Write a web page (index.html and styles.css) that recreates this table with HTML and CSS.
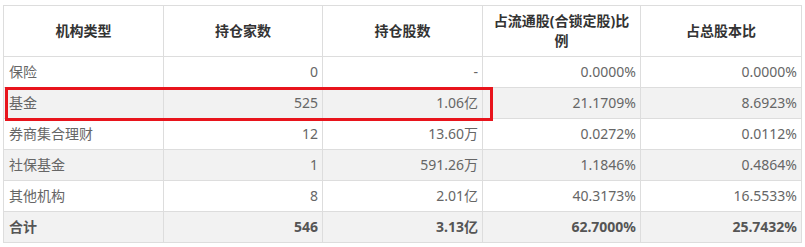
FILE: index.html
```html
<!DOCTYPE html>
<html lang="zh-CN">
<head>
<meta charset="utf-8">
<link rel="stylesheet" href="styles.css">
</head>
<body>
<div class="wrap">
  <table class="tbl">
    <colgroup>
      <col class="c1"><col class="c2"><col class="c3"><col class="c4"><col class="c5">
    </colgroup>
    <thead>
      <tr>
        <th>机构类型</th>
        <th>持仓家数</th>
        <th>持仓股数</th>
        <th>占流通股(合锁定股)比<br>例</th>
        <th>占总股本比</th>
      </tr>
    </thead>
    <tbody>
      <tr><td class="name">保险</td><td>0</td><td>-</td><td>0.0000%</td><td>0.0000%</td></tr>
      <tr class="alt"><td class="name">基金</td><td>525</td><td>1.06亿</td><td>21.1709%</td><td>8.6923%</td></tr>
      <tr><td class="name">券商集合理财</td><td>12</td><td>13.60万</td><td>0.0272%</td><td>0.0112%</td></tr>
      <tr class="alt"><td class="name">社保基金</td><td>1</td><td>591.26万</td><td>1.1846%</td><td>0.4864%</td></tr>
      <tr><td class="name">其他机构</td><td>8</td><td>2.01亿</td><td>40.3173%</td><td>16.5533%</td></tr>
      <tr class="alt total"><td class="name">合计</td><td>546</td><td>3.13亿</td><td>62.7000%</td><td>25.7432%</td></tr>
    </tbody>
  </table>
  <div class="highlight"></div>
</div>
</body>
</html>
```
FILE: styles.css
```css
html, body {
  margin: 0;
  padding: 0;
  background: #ffffff;
}
body {
  font-family: "Noto Sans", "Noto Sans CJK SC", sans-serif;
  font-size: 14px;
  color: #666666;
}
.wrap {
  position: relative;
  margin: 5px 0 0 3px;
  width: 798px;
}
.tbl {
  border-collapse: collapse;
  table-layout: fixed;
  width: 798px;
}
.c1 { width: 160px; }
.c2 { width: 159px; }
.c3 { width: 160px; }
.c4 { width: 158px; }
.c5 { width: 161px; }
.tbl th,
.tbl td {
  border: 1px solid #dddddd;
}
.tbl th {
  height: 50px;
  padding: 0 6px;
  font-weight: bold;
  color: #333333;
  text-align: center;
  line-height: 20px;
  vertical-align: middle;
}
.tbl td {
  height: 30px;
  padding: 0 4px 0 5px;
  text-align: right;
  line-height: 20px;
  vertical-align: middle;
}
.tbl td.name {
  text-align: left;
}
.tbl tr.alt td {
  background: #f2f2f2;
}
.tbl tr.total td {
  font-weight: bold;
  color: #555555;
}
.highlight {
  position: absolute;
  left: 2px;
  top: 82px;
  width: 482px;
  height: 28px;
  border: 3px solid #e8141c;
  pointer-events: none;
}
```
